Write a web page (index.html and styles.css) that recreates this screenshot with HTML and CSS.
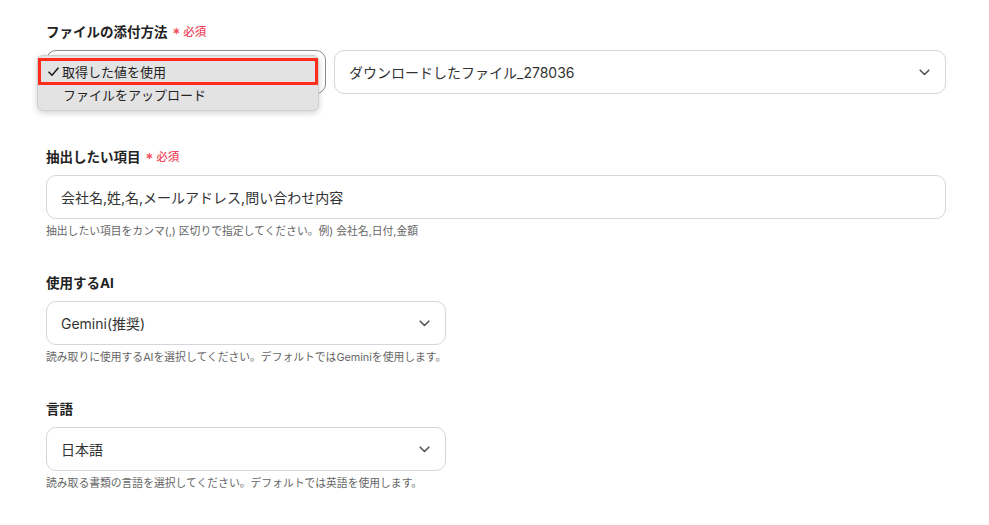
FILE: index.html
```html
<!DOCTYPE html>
<html lang="ja">
<head>
<meta charset="utf-8">
<link rel="stylesheet" href="styles.css">
</head>
<body>
<div class="form">
  <div class="field field-first">
    <div class="label">ファイルの添付方法<span class="req"><span class="ast">*</span>必須</span></div>
    <div class="row">
      <div class="control control-method"></div>
      <div class="control control-file">
        <span class="value">ダウンロードしたファイル_278036</span>
        <svg class="chev" width="11" height="7" viewBox="0 0 11 7"><path d="M1.2 1.2 L5.5 5.5 L9.8 1.2" fill="none" stroke="#555" stroke-width="1.6" stroke-linecap="round" stroke-linejoin="round"/></svg>
      </div>
    </div>
    <div class="menu">
      <div class="item item-selected">
        <svg class="check" width="11" height="10" viewBox="0 0 11 10"><path d="M1 5.2 L4 8.2 L10 1.2" fill="none" stroke="#222" stroke-width="1.6" stroke-linecap="round" stroke-linejoin="round"/></svg>
        <span>取得した値を使用</span>
      </div>
      <div class="item"><span>ファイルをアップロード</span></div>
    </div>
  </div>

  <div class="field">
    <div class="label">抽出したい項目<span class="req"><span class="ast">*</span>必須</span></div>
    <div class="control control-wide">
      <span class="value">会社名,姓,名,メールアドレス,問い合わせ内容</span>
    </div>
    <div class="help">抽出したい項目をカンマ(,) 区切りで指定してください。例) 会社名,日付,金額</div>
  </div>

  <div class="field">
    <div class="label">使用するAI</div>
    <div class="control control-half">
      <span class="value">Gemini(推奨)</span>
      <svg class="chev" width="11" height="7" viewBox="0 0 11 7"><path d="M1.2 1.2 L5.5 5.5 L9.8 1.2" fill="none" stroke="#555" stroke-width="1.6" stroke-linecap="round" stroke-linejoin="round"/></svg>
    </div>
    <div class="help">読み取りに使用するAIを選択してください。デフォルトではGeminiを使用します。</div>
  </div>

  <div class="field">
    <div class="label">言語</div>
    <div class="control control-half">
      <span class="value">日本語</span>
      <svg class="chev" width="11" height="7" viewBox="0 0 11 7"><path d="M1.2 1.2 L5.5 5.5 L9.8 1.2" fill="none" stroke="#555" stroke-width="1.6" stroke-linecap="round" stroke-linejoin="round"/></svg>
    </div>
    <div class="help">読み取る書類の言語を選択してください。デフォルトでは英語を使用します。</div>
  </div>
</div>
</body>
</html>
```

FILE: styles.css
```css
* { box-sizing: border-box; }
html, body { margin: 0; padding: 0; background: #fff; }
body {
  font-family: Inter, "Noto Sans CJK JP", "Noto Sans", sans-serif;
  color: #333;
  width: 989px;
  height: 525px;
  overflow: hidden;
}
.form {
  padding: 22px 0 0 46px;
  display: flex;
  flex-direction: column;
  gap: 34px;
}
.field { position: relative; display: flex; flex-direction: column; }
.field-first { padding-bottom: 19px; }
.label {
  font-size: 13.5px;
  font-weight: 700;
  color: #222;
  line-height: 20px;
  height: 20px;
  margin-bottom: 8px;
  display: flex;
  align-items: center;
}
.req {
  color: #f0475c;
  font-size: 11.5px;
  font-weight: 500;
  margin-left: 5px;
  display: inline-flex;
  align-items: center;
}
.ast { font-size: 15px; margin-right: 3px; position: relative; top: 2px; }
.row { display: flex; gap: 8px; }
.control {
  height: 44px;
  border: 1px solid #d3d6dc;
  border-radius: 10px;
  display: flex;
  align-items: center;
  justify-content: space-between;
  padding: 0 15px 0 14px;
  background: #fff;
}
.control-method { width: 280px; border-color: #8c8c8c; }
.control-file { width: 612px; }
.control-wide { width: 900px; }
.control-half { width: 400px; }
.value { font-size: 14px; color: #333; }
.chev { flex: none; }
.help {
  margin-top: 5px;
  font-size: 10.8px;
  color: #666;
  line-height: 15px;
}
.menu {
  position: absolute;
  left: -9px;
  top: 33px;
  width: 282px;
  background: #e3e3e3;
  border: 1px solid #cfcfcf;
  border-radius: 6px;
  box-shadow: 0 2px 6px rgba(0,0,0,0.18);
  padding: 2px 0 6px;
}
.item {
  height: 19px;
  display: flex;
  align-items: center;
  padding-left: 25px;
  font-size: 13px;
  color: #222;
}
.item-selected {
  height: 27px;
  border: 3px solid #ff2d1a;
  padding-left: 7px;
  gap: 3px;
}
.check { flex: none; }
```
